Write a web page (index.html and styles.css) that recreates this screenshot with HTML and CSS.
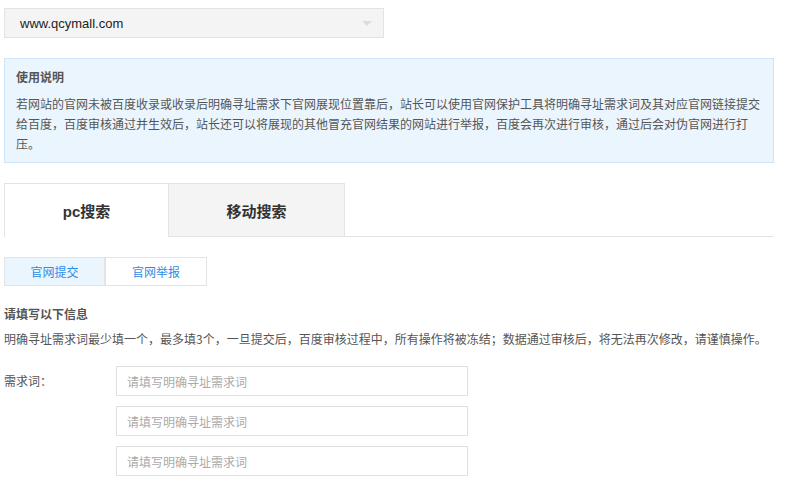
FILE: index.html
```html
<!DOCTYPE html>
<html lang="zh-CN">
<head>
<meta charset="utf-8">
<title>官网保护</title>
<link rel="stylesheet" href="styles.css">
</head>
<body>
<div class="page">
  <div class="domain-select">
    <span class="domain-text">www.qcymall.com</span>
    <span class="caret"></span>
  </div>

  <div class="notice">
    <div class="notice-title">使用说明</div>
    <p class="notice-text">若网站的官网未被百度收录或收录后明确寻址需求下官网展现位置靠后，站长可以使用官网保护工具将明确寻址需求词及其对应官网链接提交给百度，百度审核通过并生效后，站长还可以将展现的其他冒充官网结果的网站进行举报，百度会再次进行审核，通过后会对伪官网进行打压。</p>
  </div>

  <div class="tabs">
    <div class="tab tab-active">pc搜索</div>
    <div class="tab tab-idle">移动搜索</div>
    <div class="tab-rest"></div>
  </div>

  <div class="subtabs">
    <div class="subtab subtab-active">官网提交</div>
    <div class="subtab">官网举报</div>
  </div>

  <div class="section-title">请填写以下信息</div>
  <p class="section-desc">明确寻址需求词最少填一个，最多填3个，一旦提交后，百度审核过程中，所有操作将被冻结；数据通过审核后，将无法再次修改，请谨慎操作。</p>

  <div class="form-row">
    <div class="form-label">需求词：</div>
    <div class="form-inputs">
      <input class="text-input" type="text" placeholder="请填写明确寻址需求词">
      <input class="text-input" type="text" placeholder="请填写明确寻址需求词">
      <input class="text-input" type="text" placeholder="请填写明确寻址需求词">
    </div>
  </div>
</div>
</body>
</html>
```

FILE: styles.css
```css
html, body {
  margin: 0;
  padding: 0;
  background: #fff;
}

body {
  font-family: "Liberation Sans", "Noto Sans CJK SC", Arial, sans-serif;
  font-size: 12px;
  color: #555;
}

.page {
  width: 770px;
  padding: 8px 0 0 4px;
}

.domain-select {
  height: 28px;
  width: 352px;
  border: 1px solid #e3e3e3;
  background: #f4f4f4;
  display: flex;
  align-items: center;
  justify-content: space-between;
  padding: 0 11px 0 15px;
}

.domain-text {
  font-size: 13px;
  color: #222;
}

.caret {
  width: 0;
  height: 0;
  border-left: 5px solid transparent;
  border-right: 5px solid transparent;
  border-top: 5px solid #dcdcdc;
  margin-top: 1px;
}

.notice {
  margin-top: 20px;
  border: 1px solid #cfe4f7;
  background: #ebf5fe;
  padding: 8px 9px 8px 11px;
}

.notice-title {
  font-weight: bold;
  line-height: 20px;
  color: #555;
  font-family: "Noto Sans CJK SC", sans-serif;
}

.notice-text {
  margin: 7px 0 0;
  line-height: 20px;
  color: #555;
  font-family: "Noto Sans CJK SC", sans-serif;
}

.tabs {
  margin-top: 20px;
  display: flex;
  height: 54px;
}

.tab {
  display: flex;
  align-items: center;
  justify-content: center;
  font-size: 15px;
  font-weight: bold;
  color: #333;
  box-sizing: border-box;
}

.tab-active {
  width: 164px;
  border-top: 1px solid #e3e3e3;
  border-left: 1px solid #e3e3e3;
  background: #fff;
}

.tab-idle {
  width: 177px;
  border: 1px solid #e3e3e3;
  background: #f4f4f4;
}

.tab-rest {
  flex: 1;
  border-bottom: 1px solid #e3e3e3;
}

.subtabs {
  margin-top: 20px;
  display: flex;
}

.subtab {
  width: 100px;
  height: 27px;
  line-height: 27px;
  text-align: center;
  border: 1px solid #e3e3e3;
  color: #2e8de8;
  font-family: "Noto Sans CJK SC", sans-serif;
  background: #fff;
}

.subtab-active {
  background: #ebf5fe;
  border-right-width: 2px;
  width: 99px;
}

.subtab + .subtab {
  border-left: none;
}

.section-title {
  margin-top: 18px;
  line-height: 20px;
  font-weight: bold;
  color: #555;
  font-family: "Noto Sans CJK SC", sans-serif;
}

.section-desc {
  margin: 5px 0 0;
  line-height: 20px;
  color: #555;
  font-family: "Noto Sans CJK SC", sans-serif;
  white-space: nowrap;
}

.form-row {
  margin-top: 17px;
  display: flex;
}

.form-label {
  width: 112px;
  line-height: 30px;
  color: #555;
  font-family: "Noto Sans CJK SC", sans-serif;
}

.form-inputs {
  display: flex;
  flex-direction: column;
  gap: 10px;
}

.text-input {
  width: 352px;
  height: 30px;
  box-sizing: border-box;
  border: 1px solid #e0e0e0;
  padding: 0 10px;
  margin: 0;
  font-size: 12px;
  font-family: "Noto Sans CJK SC", sans-serif;
  color: #333;
  outline: none;
  background: #fff;
}

.text-input::placeholder {
  color: #aaa;
}
```
